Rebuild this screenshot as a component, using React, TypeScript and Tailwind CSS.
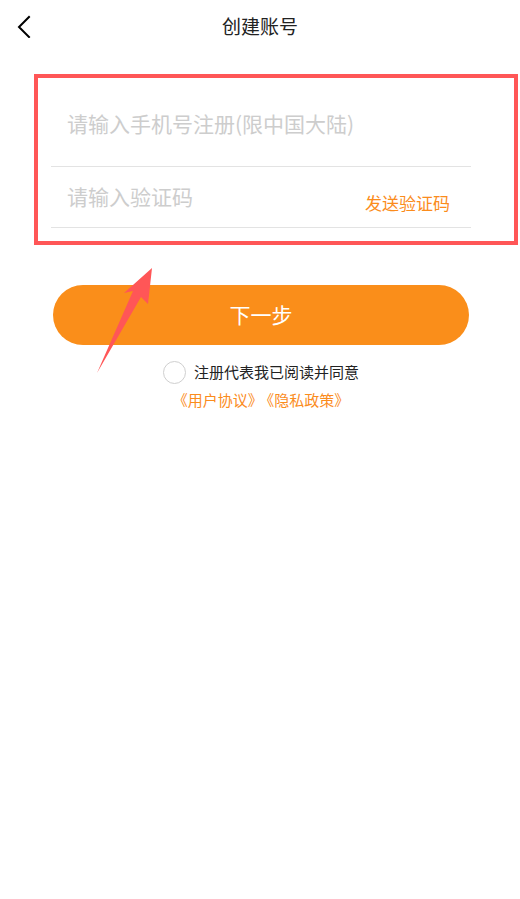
import { useState } from "react";

const font = { fontFamily: '"Noto Sans CJK SC", "Noto Sans", sans-serif' };

function BackIcon() {
  return (
    <svg width="16" height="24" viewBox="0 0 16 24" className="text-black">
      <path d="M13 3 L3 13 L13 23" fill="none" stroke="currentColor" strokeWidth="2" strokeLinecap="square" />
    </svg>
  );
}

export default function App() {
  const [agreed, setAgreed] = useState(false);

  return (
    <div className="relative h-[899px] w-[520px] overflow-hidden bg-white" style={font}>
      {/* Header */}
      <div className="relative flex h-[52px] items-center justify-center">
        <button className="absolute left-[16px] top-[14px]">
          <BackIcon />
        </button>
        <h1 className="text-[19px] text-[#222]">创建账号</h1>
      </div>

      {/* Form, framed by the annotation box */}
      <div className="ml-[34px] mr-[2px] mt-[22px] border-4 border-[#ff5657] pb-[13px] pl-[13px] pr-[43px]">
        <div className="flex h-[89px] items-center border-b border-[#e3e3e3] pl-[16px] pt-[4px]">
          <span className="text-[21px] text-[#cdcdcd]">请输入手机号注册(限中国大陆)</span>
        </div>
        <div className="flex h-[61px] items-center justify-between border-b border-[#e3e3e3] pl-[16px] pr-[21px]">
          <span className="text-[21px] text-[#cdcdcd]">请输入验证码</span>
          <span className="pt-[12px] text-[17px] text-[#fb8c1c]">发送验证码</span>
        </div>
      </div>

      {/* Next button */}
      <div className="mt-[40px] flex justify-center pl-[2px]">
        <button className="flex h-[60px] w-[416px] items-center justify-center rounded-full bg-[#fa8e1a] text-[21px] text-white">
          下一步
        </button>
      </div>

      {/* Agreement */}
      <div className="mt-[16px] flex flex-col items-center pl-[2px]">
        <label className="flex items-center gap-[8px]" onClick={() => setAgreed(!agreed)}>
          <span
            className={
              agreed
                ? "h-[23px] w-[23px] rounded-full border border-[#fa8e1a] bg-[#fa8e1a]"
                : "h-[23px] w-[23px] rounded-full border border-[#cfcfcf]"
            }
          />
          <span className="text-[15px] text-[#222]">注册代表我已阅读并同意</span>
        </label>
        <div className="mt-[5px] text-[15px] text-[#fb8c1c]">
          《用户协议》<span className="ml-[4px]">《隐私政策》</span>
        </div>
      </div>

      {/* Annotation arrow */}
      <svg className="pointer-events-none absolute left-0 top-0" width="520" height="899">
        <polygon points="152,268 148,304 141,297 97,373 133,291 124,293" fill="#ff5657" />
      </svg>
    </div>
  );
}
